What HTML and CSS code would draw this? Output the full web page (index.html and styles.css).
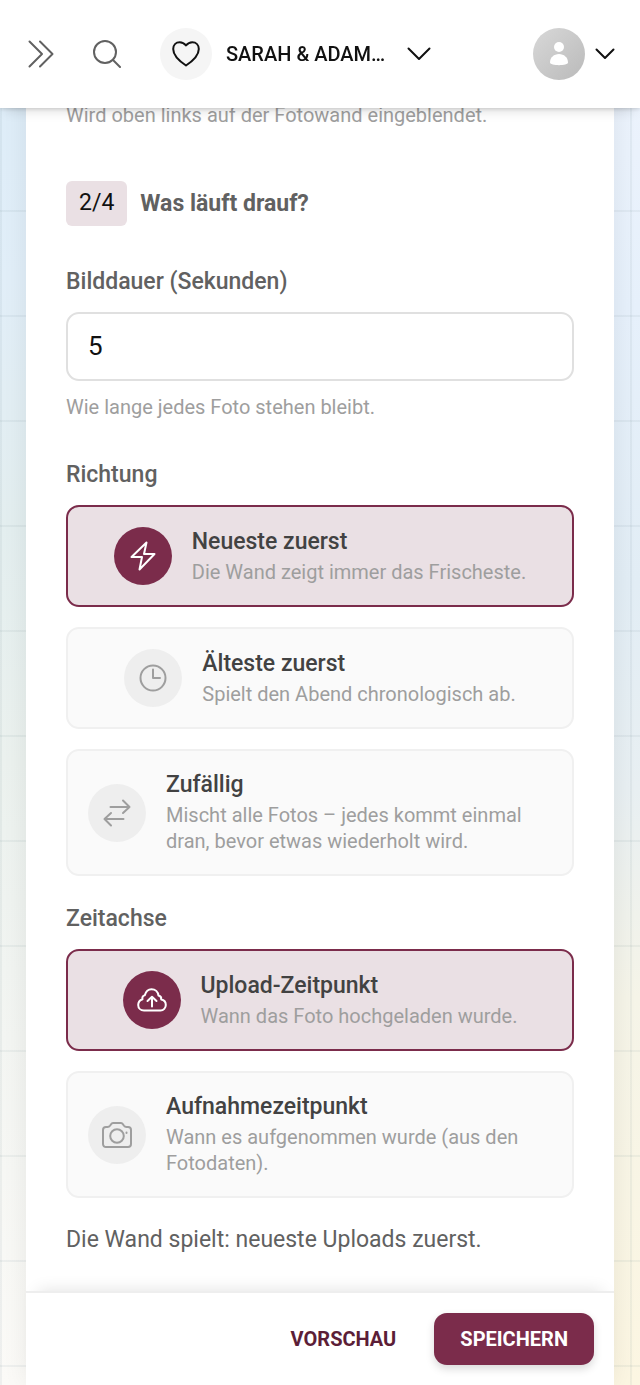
FILE: index.html
```html
<!DOCTYPE html>
<html lang="de">
<head>
  <meta charset="UTF-8" />
  <meta name="viewport" content="width=device-width, initial-scale=1.0"/>
  <title>Fotowand</title>
  <link rel="stylesheet" href="styles.css">
</head>
<body>
  <header class="topbar">
    <button class="icon-button" type="button" aria-label="Menü">
      <svg width="26" height="28" viewBox="0 0 26 28"><path d="M1.5 1.5 14 14 1.5 26.5M12 1.5 24.5 14 12 26.5"/></svg>
    </button>
    <button class="icon-button" type="button" aria-label="Suche">
      <svg width="28" height="28" viewBox="0 0 28 28"><circle cx="12" cy="12" r="11"/><path d="M20 20 27 27"/></svg>
    </button>
    <button class="event-switch" type="button">
      <span class="event-icon">
        <svg width="28" height="26" viewBox="0 0 28 26"><path d="M14 4.5C12 2 10 1.2 7.7 1.2 3.9 1.2 1.2 4.1 1.2 8 1.2 15 8 20.5 14 24.5 20 20.5 26.8 15 26.8 8 26.8 4.1 24.1 1.2 20.3 1.2 18 1.2 16 2 14 4.5Z"/></svg>
      </span>
      <span class="event-name">SARAH &amp; ADAM…</span>
      <svg width="24" height="14" viewBox="0 0 24 14"><path d="M1.5 1.5 12 12 22.5 1.5"/></svg>
    </button>
    <button class="account" type="button" aria-label="Konto">
      <span class="avatar">
        <svg width="20" height="24" viewBox="0 0 20 24"><circle cx="10" cy="5" r="5"/><path d="M1 20.5C1 15.5 5 12 10 12S19 15.5 19 20.5C19 24 1 24 1 20.5Z"/></svg>
      </span>
      <svg width="20" height="12" viewBox="0 0 20 12"><path d="M1.5 1.5 10 10 18.5 1.5"/></svg>
    </button>
  </header>

  <main class="panel">
    <form class="form">
      <p class="hint intro">Wird oben links auf der Fotowand eingeblendet.</p>

      <div class="step">
        <span class="step-count">2/4</span>
        <h2>Was läuft drauf?</h2>
      </div>

      <label class="label" for="duration">Bilddauer (Sekunden)</label>
      <input class="field" type="number" id="duration" value="5" />
      <p class="hint">Wie lange jedes Foto stehen bleibt.</p>

      <fieldset class="group">
        <legend class="label">Richtung</legend>
        <div class="options">
          <label class="option">
            <input type="radio" name="direction" checked />
            <span class="option-icon">
              <svg width="26" height="30" viewBox="0 0 26 30"><path d="M16.5 1.5 1.5 16H12L9.5 28.5 24.5 13H14Z"/></svg>
            </span>
            <span class="option-text">
              <span class="option-title">Neueste zuerst</span>
              <span class="option-info">Die Wand zeigt immer das Frischeste.</span>
            </span>
          </label>
          <label class="option">
            <input type="radio" name="direction" />
            <span class="option-icon">
              <svg width="28" height="28" viewBox="0 0 28 28"><circle cx="14" cy="14" r="12.5"/><path d="M14 5.5V14H21"/></svg>
            </span>
            <span class="option-text">
              <span class="option-title">Älteste zuerst</span>
              <span class="option-info">Spielt den Abend chronologisch ab.</span>
            </span>
          </label>
          <label class="option">
            <input type="radio" name="direction" />
            <span class="option-icon">
              <svg width="28" height="28" viewBox="0 0 28 28"><path d="M7.5 8H26.500M20 1.5 26.5 8 20 14M20.5 20H1.5M8 14 1.5 20 8 26.5"/></svg>
            </span>
            <span class="option-text">
              <span class="option-title">Zufällig</span>
              <span class="option-info">Mischt alle Fotos – jedes kommt einmal dran, bevor etwas wiederholt wird.</span>
            </span>
          </label>
        </div>
      </fieldset>

      <fieldset class="group">
        <legend class="label">Zeitachse</legend>
        <div class="options">
          <label class="option">
            <input type="radio" name="timeline" checked />
            <span class="option-icon">
              <svg width="30" height="24" viewBox="0 0 30 24"><path d="M7 22.5C3.5 22.5 1.2 20 1.2 17 1.2 14 3 12 5.5 11.2 5 9.5 5.7 7.7 7.8 7.3 8.8 3.6 11.2 1.2 14.5 1.2 18.3 1.2 21 4 21.5 7.5 23.5 8 24.5 9.5 24.2 11.5 27 12 28.8 14 28.8 17 28.8 20 26.5 22.5 23.5 22.5ZM15 18.5V9M10.5 13 15 8.8 19.5 13"/></svg>
            </span>
            <span class="option-text">
              <span class="option-title">Upload-Zeitpunkt</span>
              <span class="option-info">Wann das Foto hochgeladen wurde.</span>
            </span>
          </label>
          <label class="option">
            <input type="radio" name="timeline" />
            <span class="option-icon">
              <svg width="30" height="26" viewBox="0 0 30 26"><path d="M4 5H5.5C6.8 5 7.5 4.5 8.2 3.5L9.2 2C9.6 1.3 10.2 1 11 1H19C19.8 1 20.4 1.3 20.8 2L21.8 3.5C22.5 4.5 23.2 5 24.5 5H26C27.8 5 29 6.2 29 8V22C29 23.8 27.8 25 26 25H4C2.2 25 1 23.8 1 22V8C1 6.2 2.2 5 4 5Z"/><circle cx="15" cy="14" r="6.8"/><path d="M24.5 10.5V11"/></svg>
            </span>
            <span class="option-text">
              <span class="option-title">Aufnahmezeitpunkt</span>
              <span class="option-info">Wann es aufgenommen wurde (aus den Fotodaten).</span>
            </span>
          </label>
        </div>
      </fieldset>

      <p class="summary">Die Wand spielt: neueste Uploads zuerst.</p>
    </form>

    <footer class="actions">
      <button class="button" type="button">VORSCHAU</button>
      <button class="button primary" type="button">SPEICHERN</button>
    </footer>
  </main>
</body>
</html>
```

FILE: styles.css
```css
* {
  box-sizing: border-box;
}
body {
  font-family: Roboto, sans-serif;
  font-size: 23px;
  line-height: 30px;
  margin: 0;
  color: #616161;
  background-image:
    linear-gradient(rgba(80,110,120,0.07) 2px, transparent 2px),
    linear-gradient(90deg, rgba(80,110,120,0.07) 2px, transparent 2px),
    linear-gradient(#dcecf8, #e1eef8 20%, #e3eeef 38%, #ebf1ee 55%, #f3f5f2 75%, #fbfaf7),
    linear-gradient(#eef4fd, #e6f0fb 22%, #e2edf5 42%, #e8eff2 57%, #f5f4e8 72%, #fcf6e2);
  background-size: 105px 105px, 105px 105px, 50% 100%, 50% 100%;
  background-position: 0 0, 0 0, left top, right top;
  background-repeat: repeat, repeat, no-repeat, no-repeat;
}
button {
  font-family: inherit;
  font-size: 20px;
  border: none;
  background: none;
  padding: 0;
  cursor: pointer;
}
svg {
  display: block;
  flex: none;
  fill: none;
  stroke: currentColor;
  stroke-width: 2;
  stroke-linecap: round;
  stroke-linejoin: round;
}
.topbar {
  position: fixed;
  top: 0;
  left: 0;
  right: 0;
  z-index: 2;
  height: 108px;
  padding: 0 25px 0 28px;
  display: flex;
  align-items: center;
  background: white;
  box-shadow: 0 8px 12px -6px rgba(0,0,0,0.15), 0 1px 4px rgba(0,0,0,0.15);
}
.icon-button {
  margin-right: 39px;
  color: #616161;
}
.event-switch {
  display: flex;
  align-items: center;
  color: #111;
}
.event-icon, .avatar {
  width: 52px;
  height: 52px;
  border-radius: 50%;
  display: flex;
  align-items: center;
  justify-content: center;
  background: #f5f5f5;
}
.event-name {
  margin: 0 22px 0 14px;
  font-weight: 500;
}
.account {
  display: flex;
  align-items: center;
  gap: 10px;
  margin-left: auto;
  color: #111;
}
.avatar {
  background: linear-gradient(135deg, #d8d8d8, #bababa);
}
.avatar svg {
  fill: white;
  stroke: none;
}
.panel {
  margin: 0 26px;
  background: white;
  box-shadow: 0 0 24px rgba(0,0,0,0.07);
}
.form {
  padding: 102px 40px 36px;
}
.hint {
  margin: 13px 0 39px;
  font-size: 20px;
  line-height: 26px;
  color: #9e9e9e;
}
.intro {
  margin: 0 0 53px;
}
.step {
  display: flex;
  align-items: center;
  gap: 13px;
  margin-bottom: 40px;
}
.step-count {
  padding: 7px 13px 8px;
  border-radius: 6px;
  color: #111;
  background: #eae0e4;
}
h2 {
  margin: 0;
  font-size: 23px;
  font-weight: 700;
}
.label {
  display: block;
  margin-bottom: 14px;
  padding: 0;
  line-height: 32px;
  font-weight: 500;
}
.field {
  display: block;
  width: 100%;
  height: 69px;
  padding: 0 20px 2px;
  border: 2px solid #e0e0e0;
  border-radius: 13px;
  font-family: inherit;
  font-size: 26px;
  color: #111;
  background: white;
}
.group {
  margin: 0 0 27px;
  padding: 0;
  border: none;
  min-width: 0;
}
.options {
  display: flex;
  flex-direction: column;
  gap: 20px;
}
.option {
  display: flex;
  align-items: center;
  justify-content: center;
  gap: 20px;
  padding: 20px;
  border: 2px solid #f0f0f0;
  border-radius: 13px;
  background: #fafafa;
  cursor: pointer;
}
.option input {
  position: absolute;
  opacity: 0;
}
.option:has(input:checked) {
  border-color: #7b2c4b;
  background: #eae0e4;
}
.option-icon {
  flex: none;
  width: 58px;
  height: 58px;
  border-radius: 50%;
  display: flex;
  align-items: center;
  justify-content: center;
  color: #9e9e9e;
  background: #eee;
}
.option input:checked + .option-icon {
  color: white;
  background: #7b2c4b;
}
.option-title {
  display: block;
  margin-bottom: 3px;
  line-height: 28px;
  font-weight: 500;
  color: #424242;
}
.option-info {
  display: block;
  font-size: 20px;
  line-height: 26px;
  color: #9e9e9e;
}
.summary {
  margin: 0;
}
.actions {
  position: sticky;
  bottom: 0;
  display: flex;
  justify-content: flex-end;
  gap: 12px;
  padding: 20px;
  border-top: 2px solid #eee;
  background: white;
  box-shadow: 0 -12px 16px -12px rgba(0,0,0,0.12);
}
.button {
  height: 52px;
  padding: 0 26px;
  border-radius: 13px;
  font-weight: 700;
  color: #5c1e37;
}
.primary {
  color: white;
  background: #7b2c4b;
  box-shadow: 0 4px 8px rgba(0,0,0,0.15);
}
```
